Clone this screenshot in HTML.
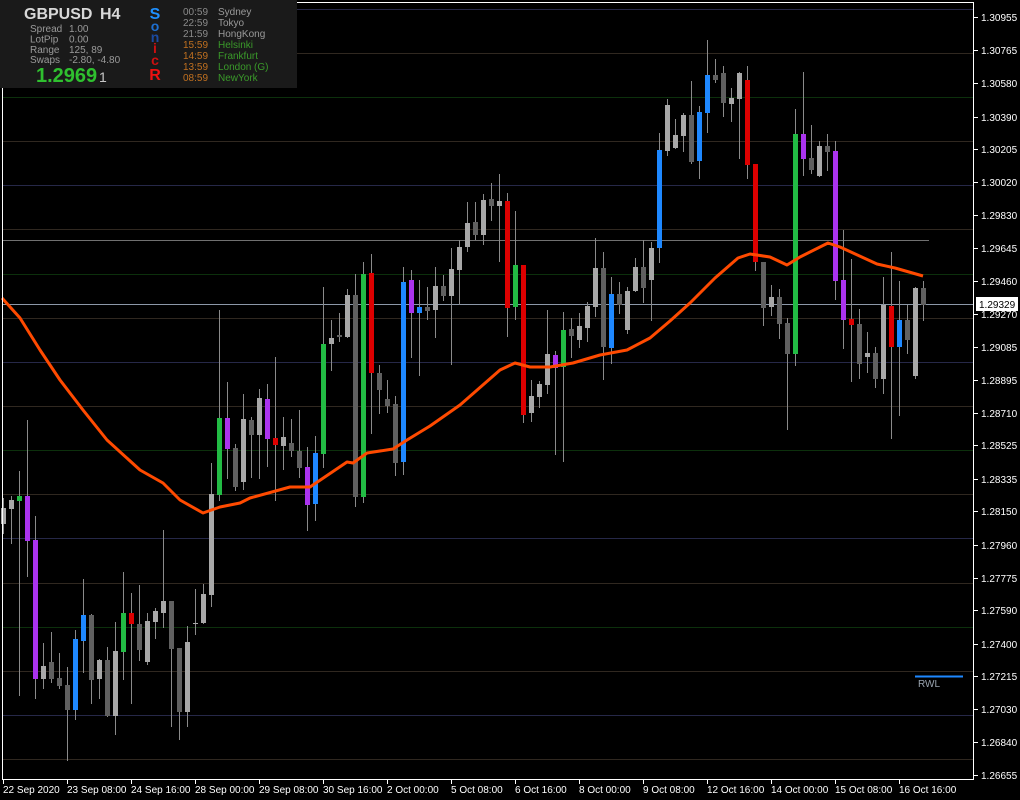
<!DOCTYPE html>
<html><head><meta charset="utf-8"><style>
html,body{margin:0;padding:0;background:#000;width:1020px;height:800px;overflow:hidden}
svg{display:block}
text{font-family:"Liberation Sans",sans-serif}
</style></head><body>
<svg id="s" width="1020" height="800" xmlns="http://www.w3.org/2000/svg">
<rect width="1020" height="800" fill="#000"/>
<g id="grid"></g>
<line x1="2" y1="240.5" x2="929" y2="240.5" stroke="#707070"/>
<line x1="2" y1="304.5" x2="974" y2="304.5" stroke="#8c98a8"/>
<g id="candles"></g>
<polyline fill="none" stroke="#ff4a00" stroke-width="3" stroke-linejoin="round" points="2,298 20,318 40,350 60,380 83,410 107,440 140,470 163,483 180,500 203,513 220,507 240,503 250,498 290,487 310,487 347,462 353,463 367,453 393,449 407,440 430,426 460,405 500,370 515,363 530,367 550,367 573,363 600,355 627,350 650,338 670,321 690,303 715,278 738,258 750,254 770,257 787,265 800,257 828,243 840,247 877,264 895,268 923,276"/>
<line x1="915" y1="676.5" x2="963" y2="676.5" stroke="#1e88ff" stroke-width="2"/>
<text x="918" y="687" font-size="10" fill="#9aa4b0">RWL</text>
<rect x="2.5" y="2.5" width="971" height="777" fill="none" stroke="#fff"/>
<g id="axis" font-size="10" fill="#fff"></g>
<rect x="976" y="297" width="42" height="14" fill="#fff"/>
<text x="979" y="308" font-size="10" fill="#000">1.29329</text>
<rect x="0" y="0" width="297" height="88" fill="#1a1a1a"/>
<text x="24" y="19" font-size="16" font-weight="bold" fill="#d8d8d8">GBPUSD</text>
<text x="100" y="19" font-size="16" font-weight="bold" fill="#d8d8d8">H4</text>
<g font-size="10" fill="#9a9a9a">
<text x="30" y="32">Spread</text><text x="69" y="32">1.00</text>
<text x="30" y="42.5">LotPip</text><text x="69" y="42.5">0.00</text>
<text x="30" y="53">Range</text><text x="69" y="53">125, 89</text>
<text x="30" y="63">Swaps</text><text x="69" y="63">-2.80, -4.80</text>
</g>
<text x="36" y="82" font-size="20" font-weight="bold" fill="#2fc02f">1.2969</text>
<text x="99" y="82" font-size="14" fill="#c8c8c8">1</text>
<g font-weight="bold" text-anchor="middle">
<text x="155" y="19" font-size="16" fill="#1e90ff">S</text>
<text x="155" y="31" font-size="14" fill="#1e6fd0">o</text>
<text x="155" y="42" font-size="14" fill="#1a4aa0">n</text>
<text x="155" y="53" font-size="14" fill="#cc1010">i</text>
<text x="155" y="65" font-size="14" fill="#cc1010">c</text>
<text x="155" y="80" font-size="16" fill="#ee1010">R</text>
</g>
<g font-size="10">
<text x="183" y="15" fill="#8a8a8a">00:59</text><text x="218" y="15" fill="#9a9a9a">Sydney</text>
<text x="183" y="26" fill="#8a8a8a">22:59</text><text x="218" y="26" fill="#9a9a9a">Tokyo</text>
<text x="183" y="37" fill="#8a8a8a">21:59</text><text x="218" y="37" fill="#9a9a9a">HongKong</text>
<text x="183" y="48" fill="#c07020">15:59</text><text x="218" y="48" fill="#3a9a2a">Helsinki</text>
<text x="183" y="59" fill="#c07020">14:59</text><text x="218" y="59" fill="#3a9a2a">Frankfurt</text>
<text x="183" y="70" fill="#c07020">13:59</text><text x="218" y="70" fill="#3a9a2a">London</text><text x="254" y="70" fill="#3a9a2a">(G)</text>
<text x="183" y="81" fill="#c07020">08:59</text><text x="218" y="81" fill="#3a9a2a">NewYork</text>
</g>
</svg>
<script>
var NS="http://www.w3.org/2000/svg";
function el(p,t,a,txt){var e=document.createElementNS(NS,t);for(var k in a)e.setAttribute(k,a[k]);if(txt)e.textContent=txt;p.appendChild(e);return e;}
var g=document.getElementById('grid');
var gc={b:"#262848",r:"#302820",g:"#0c300c"};
var gl=[[9,'b'],[53,'r'],[97,'g'],[141,'r'],[185,'b'],[229,'r'],[274,'g'],[318,'r'],[362,'b'],[406,'r'],[450,'g'],[494,'r'],[538,'b'],[583,'r'],[627,'g'],[671,'r'],[715,'b'],[759,'r']];
gl.forEach(function(l){el(g,'line',{x1:3,x2:974,y1:l[0]+.5,y2:l[0]+.5,stroke:gc[l[1]]});});
var C={L:"#a8a8a8",D:"#606060",G:"#22bb44",R:"#dd0000",B:"#1e88ff",P:"#aa33ee"};
var d=[["L",498,508,524,533],["L",496,500,509,543],["G",471,496,501,695],["P",420,496,541,576],["P",516,540,679,698],["L",643,666,679,688],["D",632,662,679,682],["D",653,678,686,688],["D",667,685,710,760],["B",630,639,710,719],
["B",579,615,641,672],["D",614,615,680,703],["L",659,660,679,698],["D",647,660,716,716],["L",622,651,716,734],["G",572,613,652,679],["R",593,613,624,703],["D",585,624,650,660],["L",613,621,662,664],["L",608,611,622,638],
["L",530,601,613,627],["D",601,601,649,726],["D",648,648,712,739],["L",626,642,712,726],["L",589,623,624,634],["L",584,594,623,623],["L",463,494,595,606],["G",310,418,495,500],["P",382,418,449,478],["D",444,448,487,490],
["L",394,419,482,489],["D",417,420,435,477],["L",389,398,435,478],["P",384,399,439,466],["R",357,438,445,500],["L",417,437,446,469],["D",419,443,451,456],["D",410,451,468,477],["P",447,467,505,530],["B",436,453,504,520],
["G",287,344,454,467],["L",320,338,344,370],["D",313,335,337,341],["L",289,295,337,337],["D",274,295,497,506],["G",262,274,497,502],["R",254,273,373,433],["D",365,373,390,413],["D",380,399,406,412],["D",396,404,463,475],
["B",267,282,462,474],["P",270,280,313,357],["B",280,307,313,375],["D",287,307,311,319],["L",267,286,310,337],["D",275,286,296,300],["L",248,269,296,364],["L",240,247,270,304],["L",202,223,247,251],["D",202,222,235,239],
["L",194,200,235,244],["D",183,199,206,220],["L",174,201,206,261],["R",193,201,308,336],["G",211,265,307,319],["R",265,265,415,422],["L",380,396,413,421],["L",381,384,397,407],["L",310,354,385,393],["P",351,355,368,454],
["G",312,330,367,461],["D",318,329,336,357],["L",313,326,340,347],["L",302,306,328,341],["L",238,268,307,316],["D",252,268,347,379],["B",277,294,348,363],["D",282,294,305,313],["L",287,291,330,333],["L",258,267,291,291],
["D",240,267,288,302],["L",242,248,280,320],["B",133,150,248,262],["L",99,105,151,155],["L",119,135,148,148],["L",113,115,136,151],["D",81,115,162,163],["B",106,112,161,178],["B",40,75,113,132],["D",59,75,80,82],
["D",66,73,103,116],["L",88,98,104,121],["L",72,73,99,158],["R",66,80,165,178],["R",164,164,262,270],["D",262,262,308,325],["L",285,297,307,315],["D",289,297,324,338],["D",318,323,354,429],["G",109,134,354,365],
["P",72,134,159,175],["D",125,158,170,173],["L",141,146,176,176],["D",134,146,152,170],["P",141,151,281,299],["P",230,280,320,348],["R",259,319,325,381],["D",309,324,364,378],["L",332,353,357,372],["D",347,353,379,387],
["L",277,305,379,393],["R",252,306,347,438],["B",281,320,347,415],["D",305,320,340,353],["L",287,288,376,378],["D",281,288,305,320]];
var cg=document.getElementById('candles');
d.forEach(function(c,i){var cx=3.5+8*i;
el(cg,'line',{x1:cx,x2:cx,y1:c[1],y2:c[4]+1,stroke:"#8a8a8a"});
var h=Math.max(1,c[3]-c[2]);
el(cg,'rect',{x:cx-2.5,y:c[2],width:5,height:h,fill:C[c[0]]});});
var ax=document.getElementById('axis');
var pr=["1.30955","1.30765","1.30580","1.30390","1.30205","1.30020","1.29830","1.29645","1.29460","1.29270","1.29085","1.28895","1.28710","1.28525","1.28335","1.28150","1.27960","1.27775","1.27590","1.27400","1.27215","1.27030","1.26840","1.26655"];
pr.forEach(function(p){var y=17+(1.30955-parseFloat(p))*17628;y=Math.round(y);
el(ax,'line',{x1:974,x2:978,y1:y+.5,y2:y+.5,stroke:"#fff"});
el(ax,'text',{x:981,y:y+4},p);});
var dl=["22 Sep 2020","23 Sep 08:00","24 Sep 16:00","28 Sep 00:00","29 Sep 08:00","30 Sep 16:00","2 Oct 00:00","5 Oct 08:00","6 Oct 16:00","8 Oct 00:00","9 Oct 08:00","12 Oct 16:00","14 Oct 00:00","15 Oct 08:00","16 Oct 16:00"];
dl.forEach(function(t,i){var x=3+64*i;
el(ax,'line',{x1:x+.5,x2:x+.5,y1:780,y2:784,stroke:"#fff"});
el(ax,'text',{x:x,y:793},t);});
</script>
</body></html>
